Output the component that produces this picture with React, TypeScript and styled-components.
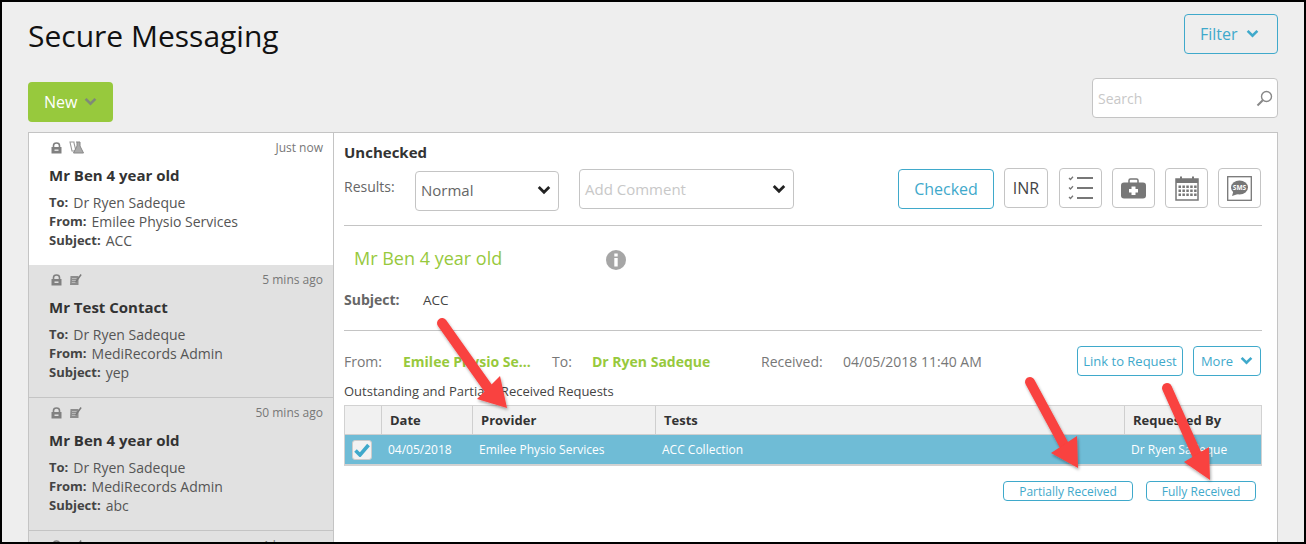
import React from 'react'
import styled, {createGlobalStyle} from 'styled-components'

const GlobalStyle = createGlobalStyle`
    html, body {
        margin: 0;
        padding: 0;
        background: #000;
    }
    * {
        box-sizing: border-box;
    }
`

const blue = '#3fa9cb'
const green = '#97c93d'
const line = '#c4c4c4'

const Page = styled.div`
    position: relative;
    width: 1306px;
    height: 544px;
    overflow: hidden;
    border: 2px solid #000;
    background: #eeeeee;
    padding: 12px 26px 0;
    font-family: "Open Sans", "Liberation Sans", sans-serif;
    font-size: 14px;
    color: #555;
`

const HeaderRow = styled.div`
    display: flex;
    justify-content: space-between;
    align-items: flex-start;
    height: 64px;
`

const Title = styled.h1`
    margin: 0;
    font-size: 30px;
    line-height: 44px;
    font-weight: 400;
    color: #111;
`

const FilterButton = styled.div`
    display: flex;
    align-items: center;
    gap: 8px;
    width: 94px;
    height: 40px;
    padding-left: 15px;
    border: 1px solid ${blue};
    border-radius: 4px;
    color: ${blue};
    font-size: 16px;
`

const ToolRow = styled.div`
    display: flex;
    justify-content: space-between;
    height: 54px;
`

const NewButton = styled.div`
    display: flex;
    align-items: center;
    gap: 7px;
    width: 85px;
    height: 40px;
    margin-top: 4px;
    padding-left: 16px;
    border-radius: 4px;
    background: ${green};
    color: #fff;
    font-size: 16px;
`

const SearchBox = styled.div`
    display: flex;
    align-items: center;
    justify-content: space-between;
    width: 186px;
    height: 40px;
    padding: 0 4px 0 5px;
    border: 1px solid ${line};
    border-radius: 4px;
    background: #fff;
    color: #c8c8c8;
    font-size: 14px;
`

const Panel = styled.div`
    display: flex;
    width: 1250px;
    height: 420px;
    border: 1px solid ${line};
    background: #fff;
`

const MessageList = styled.div`
    flex: none;
    width: 305px;
    height: 418px;
    overflow: hidden;
    border-right: 1px solid ${line};
`

const MessageItem = styled.div<{$read?: boolean}>`
    height: 133px;
    padding: 6px 10px 0 20px;
    background: ${p => (p.$read ? '#e1e1e1' : '#fff')};
    border-bottom: 1px solid ${p => (p.$read ? line : 'transparent')};

    &:first-child {
        height: 132px;
        border-bottom: 0;
    }
`

const ItemTop = styled.div`
    display: flex;
    align-items: center;
    height: 17px;
    padding-left: 2px;
`

const ItemIcons = styled.div`
    display: flex;
    align-items: center;
    gap: 7px;
`

const ItemTime = styled.span`
    margin-left: auto;
    font-size: 12px;
    color: #777;
`

const ItemName = styled.div`
    margin: 8px 0 7px;
    font-size: 15px;
    line-height: 22px;
    font-weight: 700;
    color: #333;
`

const MetaLine = styled.div`
    display: flex;
    gap: 5px;
    font-size: 14px;
    line-height: 19px;
    color: #555;
`

const MetaKey = styled.span`
    font-size: 13px;
    font-weight: 700;
    color: #444;
`

const Detail = styled.div`
    flex: 1;
    padding: 9px 15px 0 10px;
`

const Heading = styled.div`
    font-size: 15px;
    line-height: 20px;
    font-weight: 700;
    color: #333;
`

const ResultsRow = styled.div`
    display: flex;
    align-items: flex-start;
    height: 64px;
    padding-top: 6px;
    border-bottom: 1px solid ${line};
`

const ResultsLabel = styled.span`
    width: 71px;
    line-height: 38px;
    color: #666;
`

const Dropdown = styled.div<{$width: number; $drop: number; $left?: number; $muted?: boolean}>`
    display: flex;
    align-items: center;
    justify-content: space-between;
    width: ${p => p.$width}px;
    height: 40px;
    margin-top: ${p => p.$drop}px;
    margin-left: ${p => p.$left || 0}px;
    padding: 0 7px ${p => (p.$muted ? 0 : 2)}px 5px;
    border: 1px solid ${line};
    border-radius: 4px;
    font-size: 15px;
    color: ${p => (p.$muted ? '#c8c8c8' : '#666')};
`

const ActionGroup = styled.div`
    display: flex;
    margin-left: auto;
    padding-right: 1px;
    align-items: flex-start;
    gap: 10px;
`

const CheckedButton = styled.div`
    display: flex;
    align-items: center;
    justify-content: center;
    width: 96px;
    height: 40px;
    margin-top: 1px;
    border: 1px solid ${blue};
    border-radius: 4px;
    color: ${blue};
    font-size: 16px;
`

const SquareButton = styled.div<{$width?: number}>`
    display: flex;
    align-items: center;
    justify-content: center;
    width: ${p => p.$width || 43}px;
    height: 40px;
    border: 1px solid ${line};
    border-radius: 4px;
    color: #444;
    font-size: 16px;
`

const InrButton = styled(SquareButton)`
    margin-right: 1px;
`

const PatientRow = styled.div`
    display: flex;
    align-items: center;
    height: 20px;
    margin: 24px 0 0 10px;
`

const PatientName = styled.div`
    width: 252px;
    margin-bottom: 5px;
    font-size: 18px;
    color: ${green};
`

const SubjectRow = styled.div`
    display: flex;
    height: 41px;
    padding-top: 20px;
    line-height: 20px;
    font-size: 13.5px;
    color: #444;
`

const SubjectKey = styled.span`
    width: 79px;
    font-size: 14px;
    font-weight: 700;
    color: #666;
`

const Divider = styled.div`
    height: 1px;
    margin-top: 19px;
    background: ${line};
`

const FromRow = styled.div`
    display: flex;
    align-items: center;
    height: 30px;
    margin-top: 15px;
    font-size: 14px;
    color: #777;
`

const FromLabel = styled.span<{$width: number}>`
    width: ${p => p.$width}px;
    white-space: nowrap;
`

const FromValue = styled.span<{$width: number}>`
    width: ${p => p.$width}px;
    font-weight: 700;
    color: ${green};
    white-space: nowrap;
    overflow: hidden;
`

const SmallButton = styled.div<{$width: number; $left?: number}>`
    display: flex;
    align-items: center;
    justify-content: center;
    gap: 7px;
    width: ${p => p.$width}px;
    height: 30px;
    margin-left: ${p => p.$left || 0}px;
    border: 1px solid ${blue};
    border-radius: 4px;
    color: ${blue};
    font-size: 13px;
`

const TableCaption = styled.div`
    margin-top: 5px;
    font-size: 13px;
    line-height: 20px;
    color: #444;
`

const Table = styled.div`
    margin-top: 4px;
    border: 1px solid #d2d2d2;
    border-bottom: 2px solid #d2d2d2;
`

const TableGrid = styled.div<{$selected?: boolean}>`
    display: grid;
    grid-template-columns: 37px 91px 183px 469px 1fr;
    height: 29px;
    align-items: center;
    background: ${p => (p.$selected ? '#6fbcd6' : '#f1f1f1')};
    border-bottom: ${p => (p.$selected ? 0 : '1px solid #cfcfcf')};
    color: ${p => (p.$selected ? '#fff' : '#333')};
`

const HeadCell = styled.div`
    display: flex;
    align-items: center;
    height: 100%;
    padding-left: 8px;
    border-right: 1px solid #cfcfcf;
    font-size: 13px;
    font-weight: 700;

    &:last-child {
        border-right: 0;
    }
`

const BodyCell = styled.div`
    padding-left: 6px;
    font-size: 12px;
    white-space: nowrap;
`

const CheckBox = styled.div`
    display: flex;
    align-items: center;
    justify-content: center;
    width: 20px;
    height: 20px;
    margin-left: 7px;
    border: 1px solid #ccc;
    border-radius: 3px;
    background: #f2f2f2;
`

const FooterRow = styled.div`
    display: flex;
    justify-content: flex-end;
    gap: 13px;
    margin-top: 15px;
    padding-right: 6px;
`

const OutlineTag = styled.div<{$width: number}>`
    display: flex;
    align-items: center;
    justify-content: center;
    width: ${p => p.$width}px;
    height: 20px;
    border: 1px solid ${blue};
    border-radius: 4px;
    color: ${blue};
    font-size: 12px;
`

const ArrowLayer = styled.svg`
    position: absolute;
    top: -2px;
    left: -2px;
    pointer-events: none;
`

const Chevron = ({color, size = 13}: {color: string; size?: number}) => (
    <svg width={size} height={size * 0.7} viewBox="0 0 12 8">
        <path d="M1.5 1.5 L6 6 L10.5 1.5" fill="none" stroke={color} strokeWidth="2.4" />
    </svg>
)

const LockIcon = () => (
    <svg width="11" height="12" viewBox="0 0 11 12">
        <path d="M2.500 5.500V3.600C2.500 2 3.800 1 5.500 1S8.500 2 8.500 3.600V5.500" fill="none" stroke="#808080" strokeWidth="1.600" />
        <path d="M0.500 5h10v6.500h-10z" fill="#808080" />
        <rect x="3.500" y="7.500" width="4" height="1.400" fill="#e8e8e8" />
    </svg>
)

const FlaskIcon = () => (
    <svg width="15" height="13" viewBox="0 0 15 13">
        <path d="M1 1h4v1l2 8H3z" fill="none" stroke="#999" strokeWidth="1.100" />
        <path d="M7 1h4M8 1v4l-3.500 7h10L11 5V1" fill="#aaa" stroke="#888" strokeWidth="1" />
    </svg>
)

const NoteIcon = () => (
    <svg width="13" height="13" viewBox="0 0 13 13">
        <path d="M1.500 3h8v9h-8.500z" fill="#8c8c8c" />
        <path d="M3 5.500h4.500M3 7.500h4M2.800 9.500h4" stroke="#c4c4c4" strokeWidth="0.800" />
        <path d="M6.500 8l5-7 1.200 1-5 7-1.800.6z" fill="#7a7a7a" />
    </svg>
)

const ListIcon = () => (
    <svg width="26" height="26" viewBox="0 0 26 26">
        <path d="M1 3l1.500 1.500L5 1.800M1 12.500l1.500 1.500L5 11.300M1 22l1.500 1.500L5 20.800" fill="none" stroke="#777" strokeWidth="1.300" />
        <path d="M9 3h16M9 13h16M9 23h16" stroke="#777" strokeWidth="1.800" />
    </svg>
)

const MedkitIcon = () => (
    <svg width="25" height="21" viewBox="0 0 25 21">
        <path d="M8 5V2.500C8 1.500 8.700 1 9.500 1h6c.8 0 1.500.5 1.500 1.500V5" fill="none" stroke="#777" strokeWidth="1.500" />
        <rect x="0" y="4.500" width="25" height="16" rx="3" fill="#777" />
        <path d="M10.500 8.500h4v2.500H17v3.500h-2.500V17h-4v-2.500H8V11h2.500z" fill="#fff" />
    </svg>
)

const CalendarIcon = () => {
    const cells = []
    for (let row = 0; row < 3; row++) {
        for (let col = 0; col < 5; col++) {
            cells.push(<rect key={`${row}-${col}`} x={3.500 + col * 3.900} y={10.500 + row * 4} width="2.500" height="2.500" fill="#777" />)
        }
    }
    return (
        <svg width="24" height="26" viewBox="0 0 24 26">
            <path d="M1 4h22v21H1z" fill="#fff" stroke="#777" strokeWidth="1.500" />
            <rect x="1" y="4" width="22" height="4" fill="#777" />
            <path d="M6 6V1.500M18 6V1.500" stroke="#777" strokeWidth="2" />
            {cells}
        </svg>
    )
}

const SmsIcon = () => (
    <svg width="25" height="25" viewBox="0 0 25 25">
        <rect x="0.700" y="0.700" width="23.600" height="23.600" fill="#fff" stroke="#777" strokeWidth="1.300" />
        <ellipse cx="12.500" cy="11.500" rx="8.500" ry="7" fill="#777" />
        <path d="M6.500 15l-1.500 5 6-2z" fill="#777" />
        <text x="12.500" y="14" textAnchor="middle" fontSize="6.500" fontWeight="700" fill="#fff" fontFamily="Open Sans">SMS</text>
    </svg>
)

const SearchIcon = () => (
    <svg width="17" height="17" viewBox="0 0 17 17">
        <circle cx="10.500" cy="6.500" r="5" fill="none" stroke="#888" strokeWidth="1.400" />
        <path d="M6.800 10.200L1.500 15.500" stroke="#888" strokeWidth="2" />
    </svg>
)

const InfoIcon = () => (
    <svg width="20" height="20" viewBox="0 0 20 20">
        <circle cx="10" cy="10" r="10" fill="#a6a6a6" />
        <rect x="8.300" y="3.500" width="3.400" height="3" fill="#fff" />
        <rect x="8.300" y="8" width="3.400" height="8.500" fill="#fff" />
    </svg>
)

const CheckMark = () => (
    <svg width="16" height="14" viewBox="0 0 16 14">
        <path d="M1.500 7.500L6 12 14.500 2" fill="none" stroke={blue} strokeWidth="3.600" />
    </svg>
)

interface IMessage {
    time: string;
    name?: string;
    from?: string;
    subject?: string;
    read?: boolean;
    lab?: boolean;
}

const messages: IMessage[] = [
    {time: 'Just now', name: 'Mr Ben 4 year old', from: 'Emilee Physio Services', subject: 'ACC', lab: true},
    {time: '5 mins ago', name: 'Mr Test Contact', from: 'MediRecords Admin', subject: 'yep', read: true},
    {time: '50 mins ago', name: 'Mr Ben 4 year old', from: 'MediRecords Admin', subject: 'abc', read: true},
    {time: '1 hour ago', read: true},
]

const arrows = [
    'M442 323 L488 388',
    'M1030 382 L1064 445',
    'M1167 388 L1197 455',
]

const arrowHeads = [
    '507,408 500,376 477,399',
    '1078,468 1077,436 1051,453',
    '1210,480 1209,447 1184,462',
]

const App = () => (
    <Page>
        <GlobalStyle />
        <HeaderRow>
            <Title>Secure Messaging</Title>
            <FilterButton>Filter <Chevron color={blue} /></FilterButton>
        </HeaderRow>
        <ToolRow>
            <NewButton>New <Chevron color="#7f8a78" /></NewButton>
            <SearchBox>Search <SearchIcon /></SearchBox>
        </ToolRow>
        <Panel>
            <MessageList>
                {messages.map(m => (
                    <MessageItem key={m.time} $read={m.read}>
                        <ItemTop>
                            <ItemIcons>
                                <LockIcon />
                                {m.lab ? <FlaskIcon /> : <NoteIcon />}
                            </ItemIcons>
                            <ItemTime>{m.time}</ItemTime>
                        </ItemTop>
                        {m.name && (
                            <>
                                <ItemName>{m.name}</ItemName>
                                <MetaLine><MetaKey>To:</MetaKey> Dr Ryen Sadeque</MetaLine>
                                <MetaLine><MetaKey>From:</MetaKey> {m.from}</MetaLine>
                                <MetaLine><MetaKey>Subject:</MetaKey> {m.subject}</MetaLine>
                            </>
                        )}
                    </MessageItem>
                ))}
            </MessageList>
            <Detail>
                <Heading>Unchecked</Heading>
                <ResultsRow>
                    <ResultsLabel>Results:</ResultsLabel>
                    <Dropdown $width={144} $drop={3}>Normal <Chevron color="#222" size={14} /></Dropdown>
                    <Dropdown $width={215} $drop={1} $left={20} $muted>Add Comment <Chevron color="#222" size={14} /></Dropdown>
                    <ActionGroup>
                        <CheckedButton>Checked</CheckedButton>
                        <InrButton $width={44}>INR</InrButton>
                        <SquareButton><ListIcon /></SquareButton>
                        <SquareButton><MedkitIcon /></SquareButton>
                        <SquareButton><CalendarIcon /></SquareButton>
                        <SquareButton><SmsIcon /></SquareButton>
                    </ActionGroup>
                </ResultsRow>
                <PatientRow>
                    <PatientName>Mr Ben 4 year old</PatientName>
                    <InfoIcon />
                </PatientRow>
                <SubjectRow>
                    <SubjectKey>Subject:</SubjectKey> ACC
                </SubjectRow>
                <Divider />
                <FromRow>
                    <FromLabel $width={59}>From:</FromLabel>
                    <FromValue $width={149}>Emilee Physio Se...</FromValue>
                    <FromLabel $width={40}>To:</FromLabel>
                    <FromValue $width={169}>Dr Ryen Sadeque</FromValue>
                    <FromLabel $width={82}>Received:</FromLabel>
                    <FromLabel $width={234}>04/05/2018 11:40 AM</FromLabel>
                    <SmallButton $width={106}>Link to Request</SmallButton>
                    <SmallButton $width={68} $left={10}>More <Chevron color={blue} /></SmallButton>
                </FromRow>
                <TableCaption>Outstanding and Partially Received Requests</TableCaption>
                <Table>
                    <TableGrid>
                        <HeadCell />
                        <HeadCell>Date</HeadCell>
                        <HeadCell>Provider</HeadCell>
                        <HeadCell>Tests</HeadCell>
                        <HeadCell>Requested By</HeadCell>
                    </TableGrid>
                    <TableGrid $selected>
                        <CheckBox><CheckMark /></CheckBox>
                        <BodyCell>04/05/2018</BodyCell>
                        <BodyCell>Emilee Physio Services</BodyCell>
                        <BodyCell>ACC Collection</BodyCell>
                        <BodyCell>Dr Ryen Sadeque</BodyCell>
                    </TableGrid>
                </Table>
                <FooterRow>
                    <OutlineTag $width={130}>Partially Received</OutlineTag>
                    <OutlineTag $width={110}>Fully Received</OutlineTag>
                </FooterRow>
            </Detail>
        </Panel>
        <ArrowLayer width="1306" height="544" viewBox="0 0 1306 544">
            <defs>
                <filter id="arrowShadow" x="-30%" y="-30%" width="160%" height="160%">
                    <feDropShadow dx="1" dy="2" stdDeviation="1.500" floodColor="#000" floodOpacity="0.35" />
                </filter>
            </defs>
            <g filter="url(#arrowShadow)">
                {arrows.map(d => (
                    <path key={d} d={d} stroke="#f9423f" strokeWidth="10" strokeLinecap="round" fill="none" />
                ))}
                {arrowHeads.map(points => (
                    <polygon key={points} points={points} fill="#f9423f" />
                ))}
            </g>
        </ArrowLayer>
    </Page>
)

export default App
